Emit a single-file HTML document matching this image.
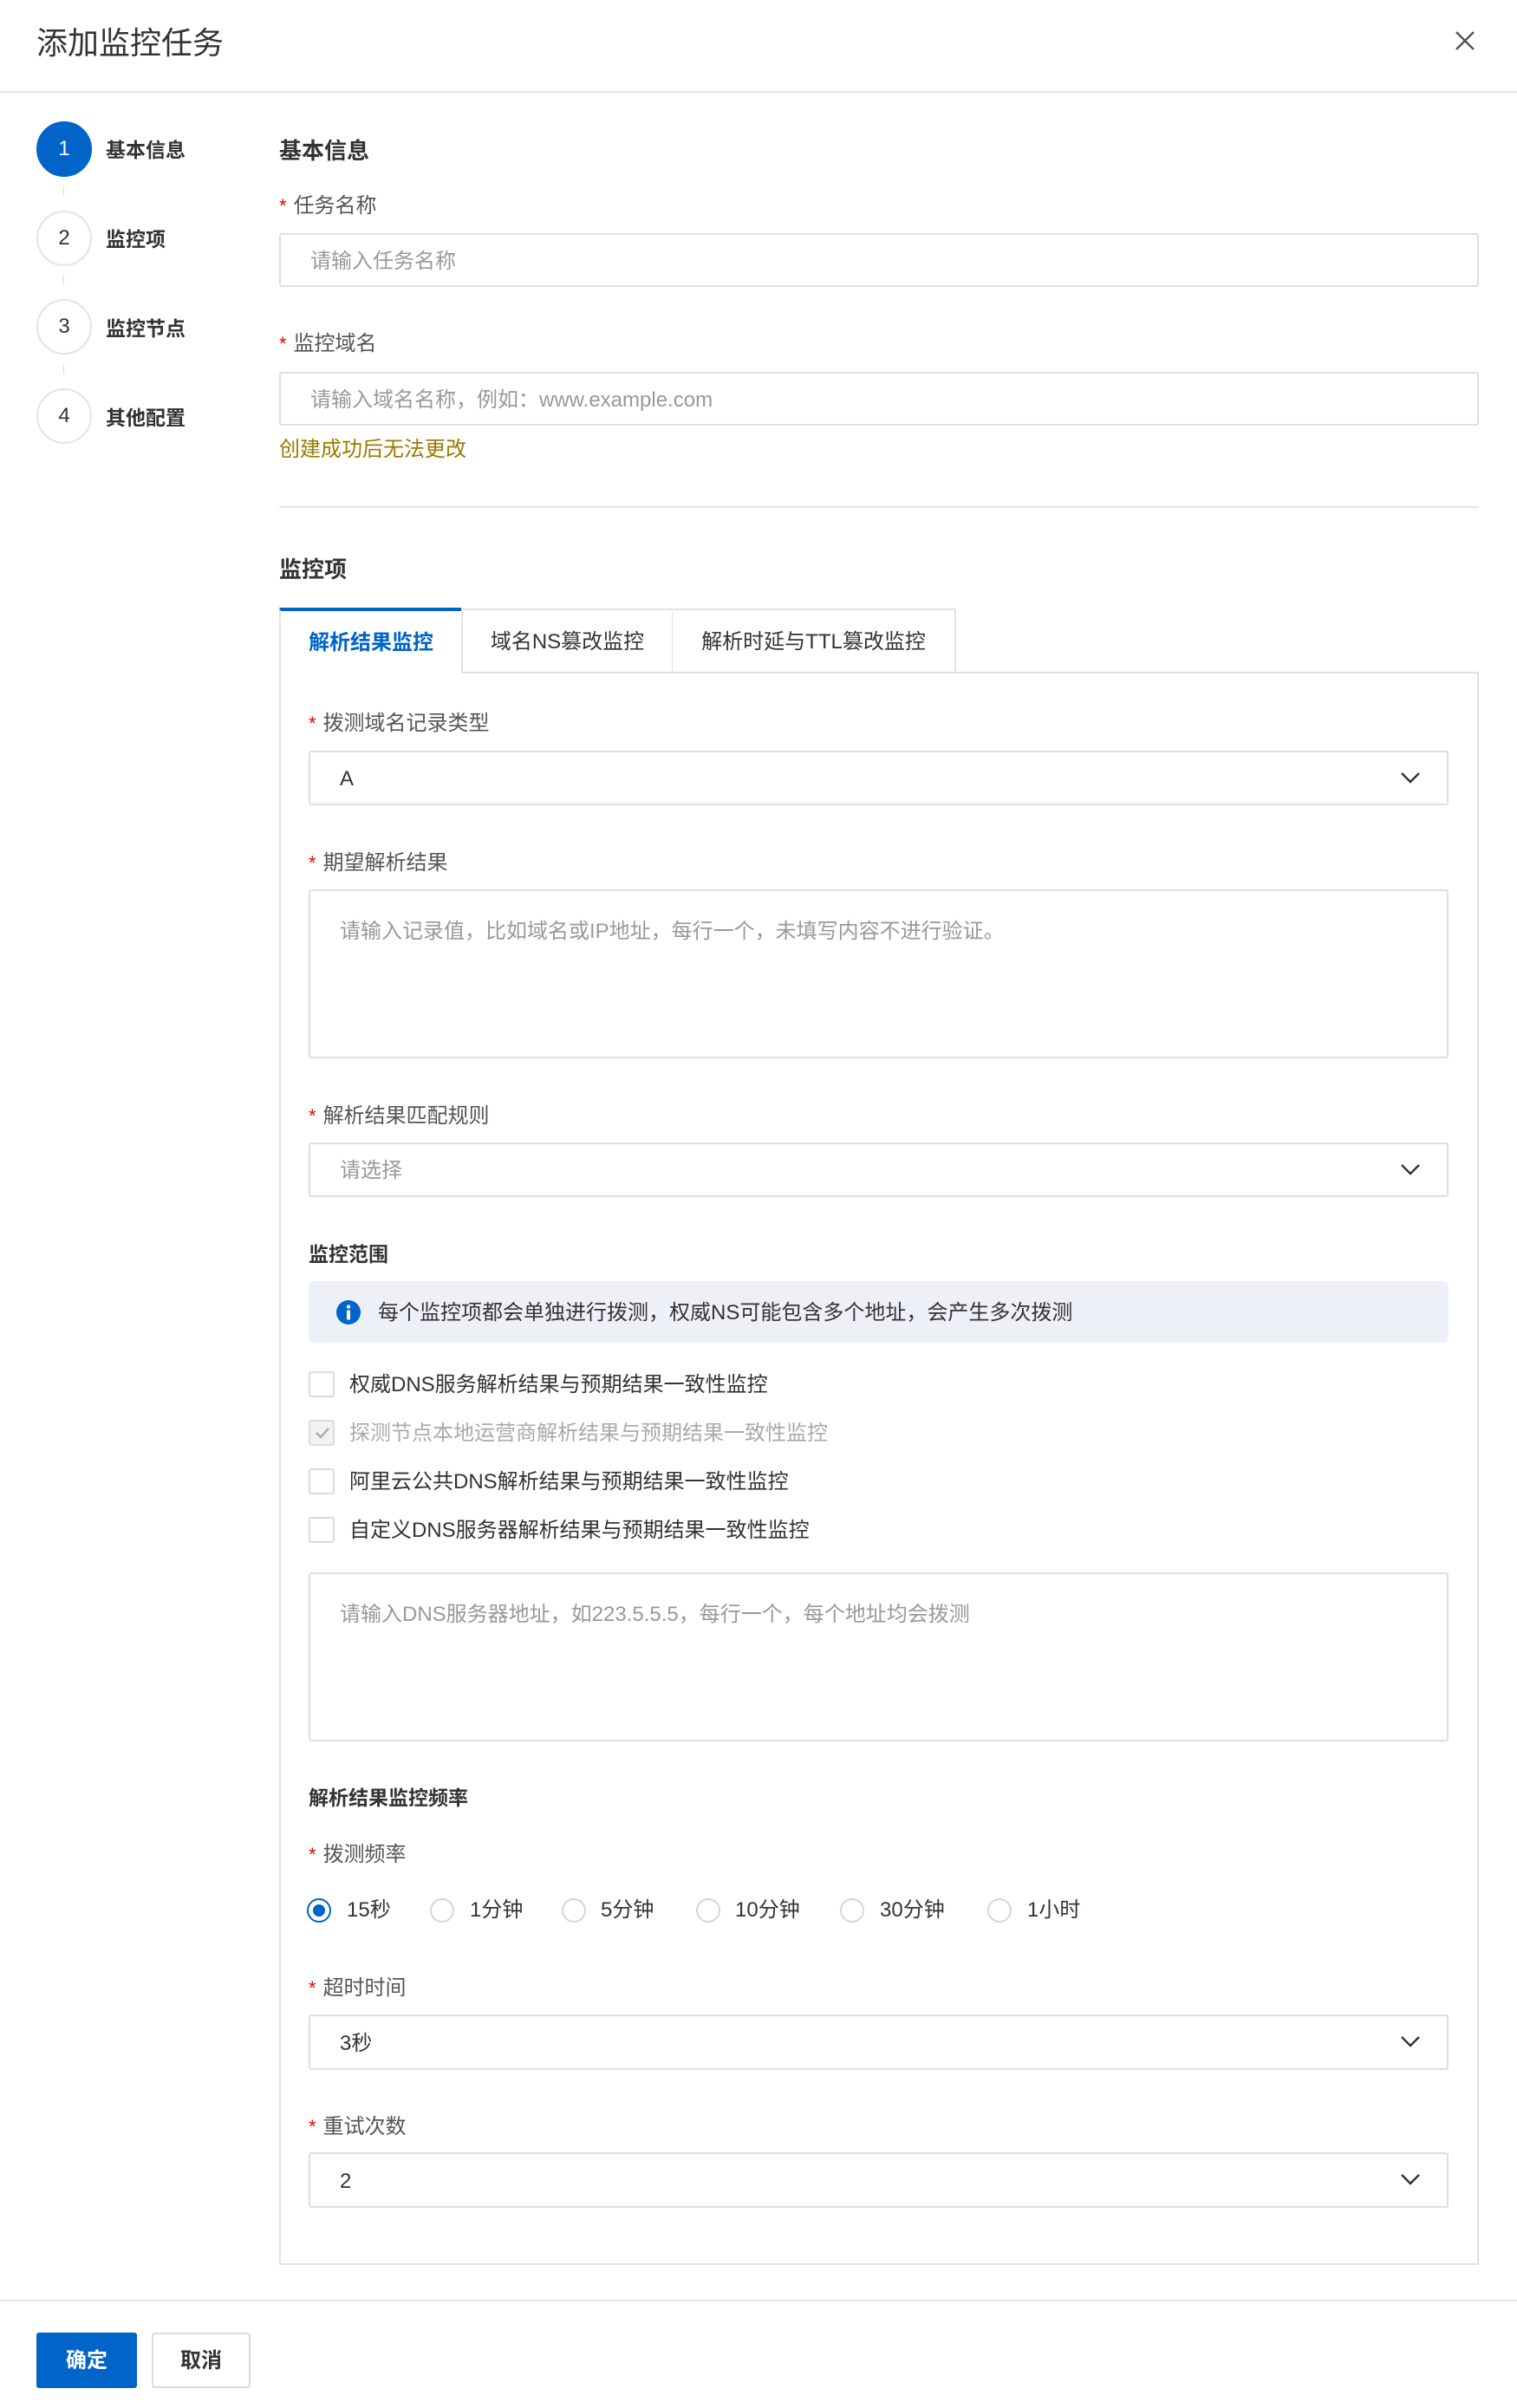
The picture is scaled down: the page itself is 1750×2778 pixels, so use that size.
<!DOCTYPE html>
<html><head><meta charset="utf-8">
<style>
*{box-sizing:border-box;margin:0;padding:0}
body{width:1750px;height:2778px;background:#fff;font-family:"Liberation Sans","Noto Sans CJK SC",sans-serif;color:#333;position:relative;overflow:hidden}
.a{position:absolute;white-space:nowrap}
.lbl{color:#555;font-size:24px;line-height:32px}
.lbl b{color:#e00;font-weight:normal;margin-right:8px;font-size:22px}
.box{position:absolute;border:2px solid #dfdfdf;border-radius:3px;background:#fff}
.ph{position:absolute;left:34px;color:#999;font-size:24px;line-height:32px}
.val{position:absolute;left:34px;color:#333;font-size:24px;line-height:32px}
.chev{position:absolute;right:30px;top:50%;margin-top:-8px}
.step{position:absolute;left:42px;width:64px;height:64px;border-radius:50%;border:2px solid #e3e3e3;text-align:center;line-height:60px;font-size:24px;color:#333;background:#fff}
.stl{position:absolute;left:122px;font-size:23px;font-weight:bold;color:#333;line-height:32px}
.h{font-size:26px;font-weight:bold;color:#333;line-height:34px}
.h2{font-size:23px;font-weight:bold;color:#333;line-height:32px}
.cb{position:absolute;left:356px;width:30px;height:30px;border:2px solid #dcdcdc;border-radius:3px;background:#fff}
.cbl{position:absolute;left:403px;font-size:24px;line-height:32px;color:#333}
.rd{position:absolute;width:28px;height:28px;border-radius:50%;border:2px solid #d6d6d6;top:2188px;background:#fff}
.rl{position:absolute;top:2186px;font-size:24px;line-height:32px;color:#333}
.lbl,.ph,.val,.h,.h2,.cbl,.rl,.stl,.tx{transform:translateY(2px)}
</style></head><body>

<div class="a" style="left:42px;top:28px;font-size:36px;line-height:44px;color:#333">添加监控任务</div>
<svg class="a" style="left:1678px;top:35px" width="24" height="24" viewBox="0 0 24 24"><path d="M2 2L22 22M22 2L2 22" stroke="#555" stroke-width="2.4" fill="none"/></svg>
<div class="a" style="left:0;top:105px;width:1750px;height:2px;background:#e5e5e5"></div>

<div class="step" style="top:140px;background:#0064c8;border-color:#0064c8;color:#fff">1</div>
<div class="stl" style="top:155px">基本信息</div>
<div class="a" style="left:73px;top:214px;width:1px;height:12px;background:#ddd"></div>
<div class="step" style="top:243px">2</div>
<div class="stl" style="top:258px">监控项</div>
<div class="a" style="left:73px;top:317px;width:1px;height:12px;background:#ddd"></div>
<div class="step" style="top:345px">3</div>
<div class="stl" style="top:361px">监控节点</div>
<div class="a" style="left:73px;top:420px;width:1px;height:12px;background:#ddd"></div>
<div class="step" style="top:448px">4</div>
<div class="stl" style="top:464px">其他配置</div>

<div class="a h" style="left:322px;top:155px">基本信息</div>
<div class="a lbl" style="left:322px;top:220px"><b>*</b>任务名称</div>
<div class="box" style="left:322px;top:269px;width:1384px;height:62px"><div class="ph" style="top:13px">请输入任务名称</div></div>
<div class="a lbl" style="left:322px;top:379px"><b>*</b>监控域名</div>
<div class="box" style="left:322px;top:429px;width:1384px;height:62px"><div class="ph" style="top:13px">请输入域名名称，例如：www.example.com</div></div>
<div class="a tx" style="left:322px;top:501px;font-size:24px;line-height:32px;color:#9a7b00">创建成功后无法更改</div>
<div class="a" style="left:322px;top:584px;width:1384px;height:2px;background:#e5e5e5"></div>

<div class="a h" style="left:322px;top:638px">监控项</div>

<div class="a" style="left:322px;top:775px;width:1384px;height:1838px;border:2px solid #e3e3e3"></div>
<div class="a" style="left:322px;top:701px;width:210px;height:76px;background:#fff;border-left:2px solid #e3e3e3;border-top:4px solid #0064c8;text-align:center;line-height:74px;font-size:24px;color:#0064c8;font-weight:bold">解析结果监控</div>
<div class="a" style="left:532px;top:702px;width:245px;height:75px;background:#fff;border:2px solid #e3e3e3;text-align:center;line-height:74px;font-size:24px;color:#333">域名NS篡改监控</div>
<div class="a" style="left:776px;top:702px;width:327px;height:75px;background:#fff;border:2px solid #e3e3e3;border-left:none;text-align:center;line-height:74px;font-size:24px;color:#333">解析时延与TTL篡改监控</div>

<div class="a lbl" style="left:356px;top:817px"><b>*</b>拨测域名记录类型</div>
<div class="box" style="left:356px;top:866px;width:1315px;height:63px"><div class="val" style="top:13px">A</div><svg class="chev" width="24" height="14" viewBox="0 0 24 14"><path d="M2 2L12 12L22 2" stroke="#333" stroke-width="2.4" fill="none"/></svg></div>

<div class="a lbl" style="left:356px;top:978px"><b>*</b>期望解析结果</div>
<div class="box" style="left:356px;top:1026px;width:1315px;height:195px"><div class="ph" style="top:29px">请输入记录值，比如域名或IP地址，每行一个，未填写内容不进行验证。</div></div>

<div class="a lbl" style="left:356px;top:1270px"><b>*</b>解析结果匹配规则</div>
<div class="box" style="left:356px;top:1318px;width:1315px;height:63px"><div class="ph" style="top:13px">请选择</div><svg class="chev" width="24" height="14" viewBox="0 0 24 14"><path d="M2 2L12 12L22 2" stroke="#333" stroke-width="2.4" fill="none"/></svg></div>

<div class="a h2" style="left:356px;top:1429px">监控范围</div>
<div class="a" style="left:356px;top:1478px;width:1315px;height:71px;background:#edf1f7;border-radius:6px"></div>
<svg class="a" style="left:388px;top:1500px" width="28" height="28" viewBox="0 0 28 28"><circle cx="14" cy="14" r="14" fill="#0064c8"/><circle cx="14" cy="7.5" r="2.2" fill="#fff"/><rect x="12" y="11.5" width="4" height="11" fill="#fff"/></svg>
<div class="a tx" style="left:436px;top:1497px;font-size:24px;line-height:32px;color:#333">每个监控项都会单独进行拨测，权威NS可能包含多个地址，会产生多次拨测</div>

<div class="cb" style="top:1582px"></div><div class="cbl" style="top:1580px">权威DNS服务解析结果与预期结果一致性监控</div>
<div class="cb" style="top:1638px;background:#f2f2f2"><svg style="position:absolute;left:5px;top:6px" width="18" height="14" viewBox="0 0 18 14"><path d="M2 7L7 12L16 2" stroke="#aaa" stroke-width="2.4" fill="none"/></svg></div><div class="cbl" style="top:1636px;color:#aaa">探测节点本地运营商解析结果与预期结果一致性监控</div>
<div class="cb" style="top:1694px"></div><div class="cbl" style="top:1692px">阿里云公共DNS解析结果与预期结果一致性监控</div>
<div class="cb" style="top:1750px"></div><div class="cbl" style="top:1748px">自定义DNS服务器解析结果与预期结果一致性监控</div>

<div class="box" style="left:356px;top:1814px;width:1315px;height:195px"><div class="ph" style="top:29px">请输入DNS服务器地址，如223.5.5.5，每行一个，每个地址均会拨测</div></div>

<div class="a h2" style="left:356px;top:2056px">解析结果监控频率</div>
<div class="a lbl" style="left:356px;top:2122px"><b>*</b>拨测频率</div>
<div class="rd" style="left:354px;top:2190px;border-color:#0064c8"><div style="position:absolute;left:5px;top:5px;width:14px;height:14px;border-radius:50%;background:#0064c8"></div></div><div class="rl" style="left:400px">15秒</div>
<div class="rd" style="left:496px;top:2190px"></div><div class="rl" style="left:542px">1分钟</div>
<div class="rd" style="left:648px;top:2190px"></div><div class="rl" style="left:693px">5分钟</div>
<div class="rd" style="left:803px;top:2190px"></div><div class="rl" style="left:848px">10分钟</div>
<div class="rd" style="left:969px;top:2190px"></div><div class="rl" style="left:1015px">30分钟</div>
<div class="rd" style="left:1139px;top:2190px"></div><div class="rl" style="left:1185px">1小时</div>

<div class="a lbl" style="left:356px;top:2276px"><b>*</b>超时时间</div>
<div class="box" style="left:356px;top:2324px;width:1315px;height:64px"><div class="val" style="top:14px">3秒</div><svg class="chev" width="24" height="14" viewBox="0 0 24 14"><path d="M2 2L12 12L22 2" stroke="#333" stroke-width="2.4" fill="none"/></svg></div>

<div class="a lbl" style="left:356px;top:2436px"><b>*</b>重试次数</div>
<div class="box" style="left:356px;top:2483px;width:1315px;height:64px"><div class="val" style="top:14px">2</div><svg class="chev" width="24" height="14" viewBox="0 0 24 14"><path d="M2 2L12 12L22 2" stroke="#333" stroke-width="2.4" fill="none"/></svg></div>

<div class="a" style="left:0;top:2653px;width:1750px;height:2px;background:#e5e5e5"></div>
<div class="a" style="left:42px;top:2691px;width:116px;height:64px;background:#0064c8;border-radius:3px;color:#fff;font-size:24px;font-weight:bold;text-align:center;line-height:66px">确定</div>
<div class="a" style="left:175px;top:2691px;width:114px;height:64px;border:2px solid #dcdcdc;border-radius:3px;color:#333;font-size:24px;font-weight:bold;text-align:center;line-height:62px">取消</div>
</body></html>
